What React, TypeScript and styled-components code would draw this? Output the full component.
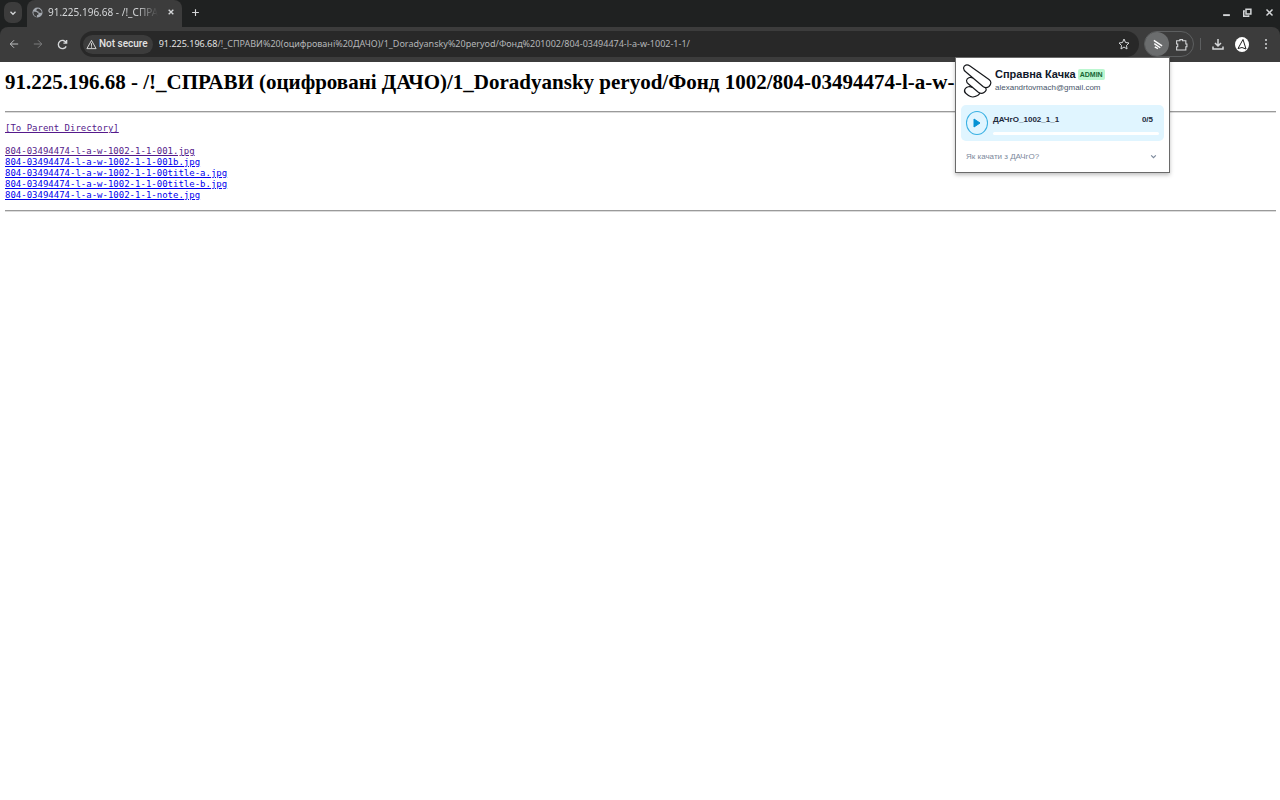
import React from "react";
import styled, { createGlobalStyle } from "styled-components";

const Global = createGlobalStyle`
  * { box-sizing: border-box; }
  body { margin: 0; background: #fff; font-family: "Noto Sans", sans-serif; }
  button { border: 0; padding: 0; margin: 0; background: none; font: inherit; color: inherit; }
  svg { display: block; flex: none; }
`;

const Chrome = styled.header`
  position: relative;
  background: #1f2121;
  color: #d5d7d9;
`;
const TabStrip = styled.div`
  display: flex;
  align-items: flex-start;
  height: 27px;
  padding-left: 4px;
`;
const TabSearch = styled.button`
  display: grid;
  place-items: center;
  width: 18px;
  height: 21px;
  margin-top: 2px;
  border-radius: 7px;
  background: #3c3c3c;
`;
const Tab = styled.div`
  display: flex;
  align-items: center;
  width: 155px;
  height: 27px;
  margin-left: 5px;
  padding: 0 6px 3px 5px;
  border-radius: 8px 8px 0 0;
  background: #3c3c3c;
`;
const TabTitle = styled.span`
  flex: 1;
  min-width: 0;
  margin: 0 8px 0 5px;
  overflow: hidden;
  white-space: nowrap;
  font-size: 10px;
  line-height: 16px;
  mask-image: linear-gradient(to right, #000 80%, transparent);
`;
const IconButton = styled.button<{ $w?: number; $h?: number; $dim?: boolean }>`
  display: grid;
  place-items: center;
  flex: none;
  width: ${(p) => p.$w ?? 24}px;
  height: ${(p) => p.$h ?? 24}px;
  opacity: ${(p) => (p.$dim ? 0.5 : 1)};
`;
const WindowControls = styled.div`
  display: flex;
  margin-left: auto;
`;
const Toolbar = styled.div`
  display: flex;
  align-items: center;
  height: 35px;
  padding: 0 2px 1px;
  border-radius: 8px 8px 0 0;
  background: #3c3c3c;
`;
const AddressBar = styled.div`
  display: flex;
  align-items: center;
  flex: 1;
  min-width: 0;
  height: 26px;
  margin: 0 5px 0 6px;
  padding: 0 3px;
  border-radius: 13px;
  background: #282828;
`;
const Security = styled.button`
  display: flex;
  align-items: center;
  gap: 2px;
  flex: none;
  height: 19px;
  padding: 0 5px 0 3px;
  border-radius: 10px;
  background: #3c3c3c;
  color: #e3e3e3;
  font: 500 10px/16px Roboto, sans-serif;
`;
const Address = styled.div`
  flex: 1;
  min-width: 0;
  margin-left: 6px;
  overflow: hidden;
  white-space: nowrap;
  font-size: 9px;
  line-height: 16px;
  color: #b4b6b8;
`;
const Host = styled.span`
  color: #e3e3e3;
`;
const ExtensionGroup = styled.div`
  display: flex;
  align-items: center;
  height: 26px;
  margin-right: 11px;
  border: 1px solid #5d5f60;
  border-radius: 13px;
`;
const ActiveExtension = styled(IconButton)`
  border-radius: 50%;
  background: #6b6d6e;
  color: #fff;
`;
const Divider = styled.span`
  width: 1px;
  height: 12px;
  margin-left: -5px;
  margin-right: 5px;
  background: #5d5f60;
`;

const Listing = styled.main`
  padding: 5px 4px 0 5px;
`;
const Title = styled.h1`
  margin: 0 0 14px;
  overflow: hidden;
  white-space: nowrap;
  color: #000;
  font: bold 21px/30px "Liberation Serif", serif;
`;
const Rule = styled.hr`
  margin: 0;
  border: 0;
  border-top: 1px solid #9a9a9a;
  border-bottom: 1px solid #dcdcdc;
`;
const Files = styled.nav`
  display: flex;
  flex-direction: column;
  align-items: flex-start;
  padding: 10px 0 9px;
  font: 9px/11px "DejaVu Sans Mono", monospace;
`;
const FileLink = styled.a<{ $visited?: boolean; $parent?: boolean }>`
  margin-bottom: ${(p) => (p.$parent ? 12 : 0)}px;
  color: ${(p) => (p.$visited ? "#551a8b" : "#0000ee")};
`;

const Popup = styled.aside`
  position: absolute;
  z-index: 2;
  top: 57px;
  right: 110px;
  width: 215px;
  padding: 5px 5px 0;
  border: 1px solid #6a6a6a;
  background: #fff;
  box-shadow: 0 2px 4px rgba(0, 0, 0, 0.25);
  color: #1e293b;
  font-family: "Liberation Sans", sans-serif;
`;
const Profile = styled.div`
  display: flex;
  align-items: center;
  gap: 3px;
  height: 36px;
  padding: 0 0 1px 1px;
`;
const NameRow = styled.div`
  display: flex;
  align-items: center;
  gap: 2px;
`;
const Name = styled.strong`
  color: #0f172a;
  font-size: 11px;
  line-height: 15px;
`;
const Badge = styled.span`
  padding: 0 2px;
  border-radius: 2px;
  background: #bbf7d0;
  color: #166534;
  font-size: 7px;
  font-weight: 700;
  line-height: 11px;
`;
const Email = styled.div`
  color: #475569;
  font-size: 8px;
  line-height: 12px;
`;
const Job = styled.section`
  display: flex;
  align-items: center;
  gap: 5px;
  height: 36px;
  margin-top: 6px;
  padding: 0 5px;
  border-radius: 5px;
  background: #e0f5ff;
`;
const Play = styled.button`
  display: grid;
  place-items: center;
  flex: none;
  width: 22px;
  height: 24px;
  border: 1px solid #38b0e3;
  border-radius: 50%;
  color: #0592d4;
`;
const JobBody = styled.div`
  flex: 1;
  padding-top: 3px;
`;
const JobText = styled.div`
  display: flex;
  justify-content: space-between;
  padding-right: 6px;
  font-size: 8px;
  font-weight: 700;
  line-height: 12px;
`;
const Track = styled.div`
  height: 3px;
  margin-top: 6px;
  border-radius: 2px;
  background: #fff;
`;
const Help = styled.button`
  display: flex;
  align-items: center;
  justify-content: space-between;
  width: 100%;
  height: 31px;
  padding: 0 7px 0 5px;
  color: #7c899c;
  font-size: 8px;
`;

type IconProps = { d: string; size?: number; width?: number };
const Icon = ({ d, size = 12, width = 2 }: IconProps) => (
  <svg width={size} height={size} viewBox="0 0 24 24" fill="none" stroke="currentColor" strokeWidth={width} aria-hidden="true">
    <path d={d} />
  </svg>
);

const Globe = () => (
  <svg width="11" height="11" viewBox="0 0 22 22" aria-hidden="true">
    <circle cx="11" cy="11" r="10" fill="#a4a9b0" />
    <path d="M3 9l6 1 4 3v2l-3 1v4c-5-1-8-5-7-11zM12 3l-3 2v3l4 1v2l6 1c1-4-2-8-7-9z" fill="#3c3c3c" />
  </svg>
);

const Hand = () => (
  <svg width="30" height="34" viewBox="0 0 30 34" fill="none" stroke="#16181c" strokeWidth="1.200" strokeLinejoin="round" aria-hidden="true">
    <path d="M8 2C5 0 2 1 1.500 4C1.500 6 3 7.500 4.500 8.500L21 22.500C23 24 25 24 27 22.500C29.500 20 29.500 17.500 27 15.500Z" />
    <path d="M11 14C8 12.500 5 14 4.500 16.500C4.500 18 5 19 6.500 20L16 28C18 29.500 20 30 22 28.500C24 27 25 25.500 23.500 24" />
    <path d="M10.500 23.500C8 22 4.500 22.500 3 25C2 27 2.500 28.500 4 29.500L6.500 31.500C9 33.500 13 33 15.500 31.500C17 30.500 18 30 17.500 29" />
  </svg>
);

const files = [
  "804-03494474-l-a-w-1002-1-1-001.jpg",
  "804-03494474-l-a-w-1002-1-1-001b.jpg",
  "804-03494474-l-a-w-1002-1-1-00title-a.jpg",
  "804-03494474-l-a-w-1002-1-1-00title-b.jpg",
  "804-03494474-l-a-w-1002-1-1-note.jpg",
];

export default function App() {
  return (
    <>
      <Global />
      <Chrome>
        <TabStrip>
          <TabSearch aria-label="Search tabs"><Icon d="M6 9l6 6 6-6" size={10} width={3} /></TabSearch>
          <Tab>
            <Globe />
            <TabTitle>91.225.196.68 - /!_СПРАВИ</TabTitle>
            <IconButton $w={10} $h={20} aria-label="Close tab"><Icon d="M5 5l14 14M19 5L5 19" size={8} width={4} /></IconButton>
          </Tab>
          <IconButton $w={26} aria-label="New tab"><Icon d="M12 3v18M3 12h18" size={9} width={3} /></IconButton>
          <WindowControls>
            <IconButton $w={22} aria-label="Minimize"><Icon d="M3 19h18" size={9} width={5} /></IconButton>
            <IconButton $w={21} aria-label="Restore"><Icon d="M8 3h13v13H8zM5 8H2v14h13v-3" size={9} width={4} /></IconButton>
            <IconButton $w={22} aria-label="Close"><Icon d="M4 4l16 16M20 4L4 20" size={9} width={4} /></IconButton>
          </WindowControls>
        </TabStrip>
        <Toolbar>
          <IconButton aria-label="Back"><Icon d="M22 12H4M12 3l-9 9 9 9" size={10} width={2} /></IconButton>
          <IconButton $dim aria-label="Forward"><Icon d="M2 12h18M12 3l9 9-9 9" size={10} width={2} /></IconButton>
          <IconButton aria-label="Reload"><Icon d="M20 16a9 9 0 1 1 0-8M21 2v7h-7" size={11} width={3} /></IconButton>
          <AddressBar>
            <Security><Icon d="M12 3L2 21h20zM12 9v6M12 16v3" size={11} width={2} />Not secure</Security>
            <Address><Host>91.225.196.68</Host>/!_СПРАВИ%20(оцифровані%20ДАЧО)/1_Doradyansky%20peryod/Фонд%201002/804-03494474-l-a-w-1002-1-1/</Address>
            <IconButton aria-label="Bookmark"><Icon d="M12 2l3 7 7 1-5 5 1 7-6-4-6 4 1-7-5-5 7-1z" size={12} width={2} /></IconButton>
          </AddressBar>
          <ExtensionGroup>
            <ActiveExtension aria-label="Справна Качка"><Icon d="M4 3l18 12M5 10l13 9M6 17l7 4" size={11} width={3} /></ActiveExtension>
            <IconButton aria-label="Extensions"><Icon d="M3 5h6V3h5v2h6v6h2v5h-2v6H3v-6h2v-5H3z" size={13} width={2} /></IconButton>
          </ExtensionGroup>
          <Divider />
          <IconButton aria-label="Downloads"><Icon d="M12 2v14M6 10l6 6 6-6M2 17v5h20v-5" size={12} width={3} /></IconButton>
          <IconButton aria-label="Profile">
            <svg width="14" height="15" viewBox="0 0 28 30"><ellipse cx="14" cy="15" rx="14" ry="15" fill="#fff" /><path d="M6 23L16 5l6 19-8-3z" fill="none" stroke="#222" strokeWidth="2" /></svg>
          </IconButton>
          <IconButton aria-label="Menu"><Icon d="M12 2v4M12 10v4M12 18v4" size={12} width={3} /></IconButton>
        </Toolbar>
      </Chrome>
      <Popup>
        <Profile>
          <Hand />
          <div>
            <NameRow><Name>Справна Качка</Name><Badge>ADMIN</Badge></NameRow>
            <Email>alexandrtovmach@gmail.com</Email>
          </div>
        </Profile>
        <Job>
          <Play aria-label="Start"><svg width="8" height="10" viewBox="0 0 8 10"><path d="M1 1l6 4-6 4z" fill="currentColor" stroke="currentColor" strokeLinejoin="round" /></svg></Play>
          <JobBody>
            <JobText><span>ДАЧгО_1002_1_1</span><span>0/5</span></JobText>
            <Track />
          </JobBody>
        </Job>
        <Help>Як качати з ДАЧгО?<Icon d="M4 8l8 8 8-8" size={7} width={4} /></Help>
      </Popup>
      <Listing>
        <Title>91.225.196.68 - /!_СПРАВИ (оцифровані ДАЧО)/1_Doradyansky peryod/Фонд 1002/804-03494474-l-a-w-1002-1-1/</Title>
        <Rule />
        <Files>
          <FileLink href="#parent" $visited $parent>[To Parent Directory]</FileLink>
          {files.map((file, i) => (
            <FileLink key={file} href={"#" + file} $visited={i === 0}>{file}</FileLink>
          ))}
        </Files>
        <Rule />
      </Listing>
    </>
  );
}
